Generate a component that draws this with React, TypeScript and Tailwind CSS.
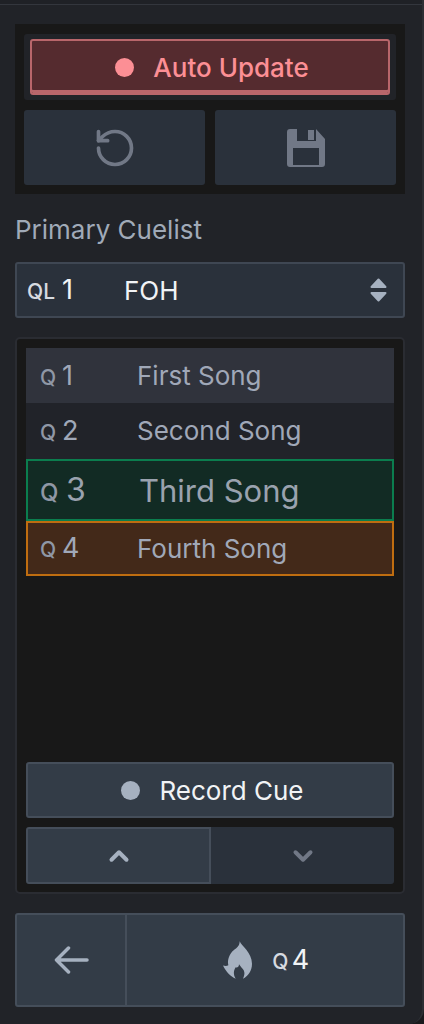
import { ChevronDown, ChevronUp, RotateCcw } from "lucide-react";

const CUES = [
  { n: 1, name: "First Song", row: "h-[55px] bg-[#30333c]" },
  { n: 2, name: "Second Song", row: "h-[56px] bg-[#212329]" },
];

function SaveIcon() {
  return (
    <svg width="38" height="38" viewBox="0 0 38 38" fill="currentColor">
      <path
        fillRule="evenodd"
        d="M3 0H10V12H29V0L38 10V35Q38 38 35 38H3Q0 38 0 35V3Q0 0 3 0ZM6 19V36H32V19Z"
      />
      <rect x="21" y="1" width="6" height="10" />
    </svg>
  );
}

function FlameIcon() {
  return (
    <svg width="29" height="38" viewBox="28 35 87 113" fill="currentColor">
      <path d="M78 35C84 50 115 68 115 103C115 125 103 140 88 148C96 132 92 122 84 115L76 104C76 112 70 116 66 113C60 122 58 133 66 148C50 140 38 128 28 108C34 110 40 110 44 107C40 90 48 72 60 62C70 55 78 48 78 35Z" />
    </svg>
  );
}

function SortIcon() {
  return (
    <svg width="17" height="24" viewBox="0 0 17 24" fill="currentColor" stroke="currentColor" strokeWidth="2" strokeLinejoin="round">
      <path d="M8.5 1.5L15.5 9H1.5Z" />
      <path d="M1.5 15H15.5L8.5 22.5Z" />
    </svg>
  );
}

function BackArrow() {
  return (
    <svg width="35" height="28" viewBox="0 0 35 28" fill="none" stroke="currentColor" strokeWidth="3.5" strokeLinecap="round" strokeLinejoin="round">
      <path d="M33 14H2.5M14.5 2L2.5 14L14.5 26" />
    </svg>
  );
}

function CueRow({ n, name, className }: { n: number; name: string; className: string }) {
  return (
    <div className={`flex items-center pl-[14px] text-[#a0a8b8] ${className}`}>
      <span className="mt-[4px] flex w-[97px] shrink-0 items-baseline">
        <span className="w-[22px] text-[21px] font-medium text-[#8f97a5]">Q</span>
        <span className="text-[27px] leading-none">{n}</span>
      </span>
      <span className="text-[26px] leading-none">{name}</span>
    </div>
  );
}

export default function App() {
  return (
    <div className="h-[1024px] w-[424px] bg-[#19191c] font-['Inter',sans-serif]">
      <div className="h-full overflow-hidden rounded-br-[15px] border-r-2 border-[#2c2e33] bg-[#212328]">
        <div className="h-[5px] border-b border-[#33363d] bg-[#1f2126]" />

        {/* auto update + actions */}
        <div className="ml-[15px] mr-[17px] mt-[19px] bg-[#181818] px-[9px] pb-[9px] pt-[10px]">
          <div className="rounded-[3px] bg-[#212328] px-[6px] py-[5px]">
            <button className="flex h-[56px] w-full items-center justify-center gap-[19px] rounded-[3px] border-2 border-[#b9666b] bg-[#552b2f] pl-[4px] text-[26px] font-[450] text-[#fc8f95] shadow-[inset_0_-3px_0_#b9666b]">
              <span className="size-[19px] rounded-full bg-[#fc8f95]" />
              Auto Update
            </button>
          </div>
          <div className="mt-[10px] grid grid-cols-2 gap-[10px]">
            <button className="flex h-[75px] items-center justify-center rounded-[3px] bg-[#2a313b] text-[#717886]">
              <RotateCcw size={44} strokeWidth={2} />
            </button>
            <button className="flex h-[75px] items-center justify-center rounded-[3px] bg-[#2a313b] text-[#717886]">
              <SaveIcon />
            </button>
          </div>
        </div>

        <div className="ml-[15px] mr-[17px] mt-[20px] text-[26px] leading-[32px] text-[#a0aab8]">Primary Cuelist</div>

        <div className="ml-[15px] mr-[17px] mt-[16px] flex h-[56px] items-center rounded-[3px] border-2 border-[#3f4753] bg-[#2a313b] pl-[10px] pr-[16px] text-[#f1f3f5]">
          <span className="mt-[3px] flex w-[97px] shrink-0 items-baseline">
            <span className="w-[35px] text-[21px] font-medium text-[#d6dae0]">QL</span>
            <span className="text-[27px] leading-none">1</span>
          </span>
          <span className="text-[26px]">FOH</span>
          <span className="ml-auto text-[#a6b1c0]">
            <SortIcon />
          </span>
        </div>

        {/* cue list */}
        <div className="ml-[15px] mr-[17px] mt-[19px] flex h-[557px] flex-col rounded-[5px] border-2 border-[#2a2c32] bg-[#181818] px-[9px] pb-[8px] pt-[9px]">
          {CUES.map((c) => (
            <CueRow key={c.n} n={c.n} name={c.name} className={c.row} />
          ))}
          <div className="flex h-[62px] items-center border-2 border-[#0b7d4e] bg-[#122b24] pl-[12px] text-[#9aa2ae]">
            <span className="mt-[5px] flex w-[99px] shrink-0 items-baseline">
              <span className="w-[26px] text-[24px] font-medium text-[#8f97a5]">Q</span>
              <span className="text-[32px] leading-none">3</span>
            </span>
            <span className="text-[31px] leading-none">Third Song</span>
          </div>
          <div className="flex h-[55px] items-center border-2 border-[#bf6d10] bg-[#432919] pl-[12px] text-[#a0a8b8]">
            <span className="mt-[3px] flex w-[97px] shrink-0 items-baseline">
              <span className="w-[22px] text-[21px] font-medium text-[#8f97a5]">Q</span>
              <span className="text-[27px] leading-none">4</span>
            </span>
            <span className="text-[26px] leading-none">Fourth Song</span>
          </div>

          <button className="mt-auto flex h-[56px] items-center justify-center gap-[19px] rounded-[3px] border-2 border-[#454e5a] bg-[#333c47] pl-[5px] text-[26px] text-[#f1f3f5]">
            <span className="size-[19px] rounded-full bg-[#a6b1c0]" />
            Record Cue
          </button>
          <div className="mt-[9px] flex h-[57px]">
            <button className="flex w-[185px] items-center justify-center rounded-l-[3px] border-2 border-[#454e5a] bg-[#333c47] text-[#a6b1c0]">
              <ChevronUp size={30} strokeWidth={3.2} />
            </button>
            <button className="flex flex-1 items-center justify-center rounded-r-[3px] bg-[#2a313b] text-[#717886]">
              <ChevronDown size={30} strokeWidth={3.2} />
            </button>
          </div>
        </div>

        {/* go */}
        <div className="ml-[15px] mr-[17px] mt-[19px] flex h-[94px] rounded-[3px] border-2 border-[#454e5a] bg-[#333c47]">
          <button className="flex w-[110px] items-center justify-center border-r-2 border-[#454e5a] text-[#a6b1c0]">
            <BackArrow />
          </button>
          <button className="flex flex-1 items-center justify-center pl-[2px] text-[#f1f3f5]">
            <span className="mr-[17px] text-[#a6b1c0]">
              <FlameIcon />
            </span>
            <span className="mt-[3px] flex items-baseline">
              <span className="w-[23px] text-[21px] font-medium text-[#d6dae0]">Q</span>
              <span className="text-[27px] leading-none">4</span>
            </span>
          </button>
        </div>
      </div>
    </div>
  );
}
